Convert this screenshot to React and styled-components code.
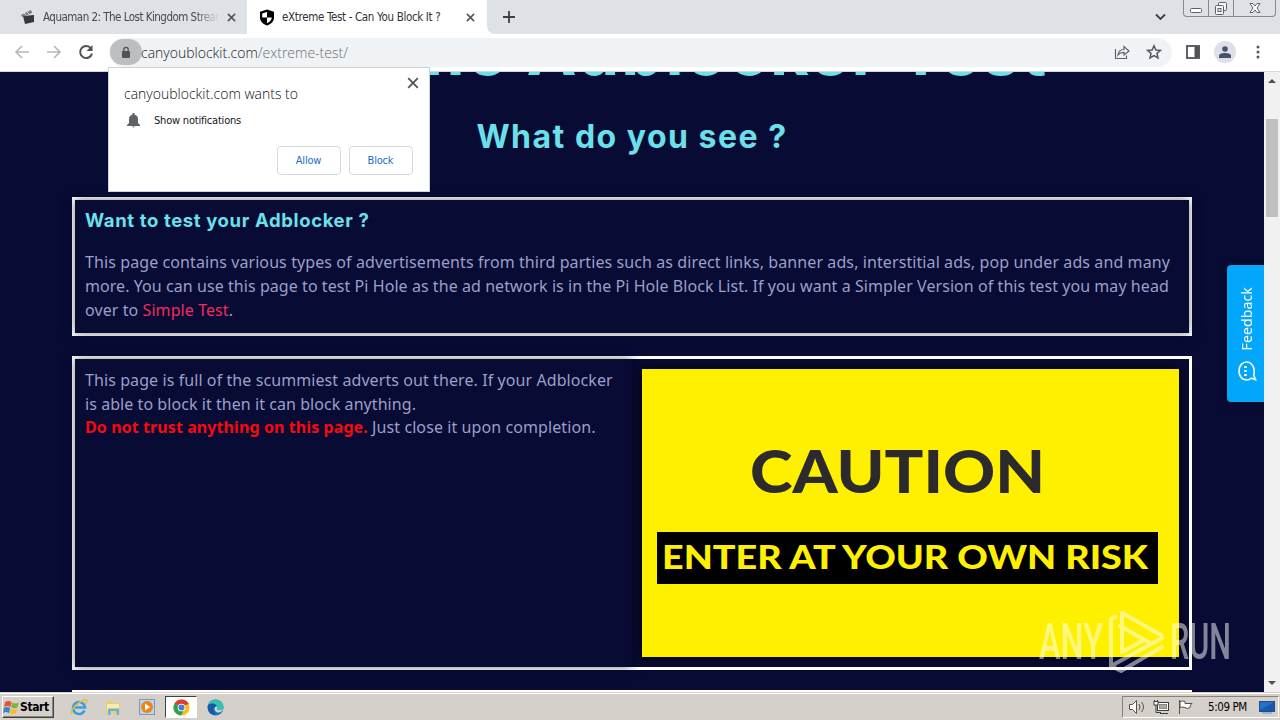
import React from "react";
import styled, { createGlobalStyle } from "styled-components";

const Global = createGlobalStyle`
  * { box-sizing: border-box; }
  body { margin: 0; overflow: hidden; }
  h1, h2, h3, p { margin: 0; }
`;

const ui = `"DejaVu Sans Condensed", "DejaVu Sans", sans-serif`;

const Screen = styled.div`
  position: relative;
  width: 1280px;
  height: 720px;
  display: flex;
  flex-direction: column;
  overflow: hidden;
  background: #080b34;
  font-family: ${ui};
  white-space: nowrap;
`;

/* ---------- browser chrome ---------- */
const TabStrip = styled.div`
  height: 34px;
  flex: none;
  display: flex;
  background: #dee1e6;
`;
const Tab = styled.div`
  width: ${(p) => (p.$active ? 240 : 247)}px;
  height: 34px;
  display: flex;
  align-items: center;
  padding: 0 9px 0 ${(p) => (p.$active ? 12 : 20)}px;
  background: ${(p) => (p.$active ? "#fff" : "#dee1e6")};
  border-radius: ${(p) => (p.$active ? "8px 8px 0 0" : "0 0 8px 0")};
  color: ${(p) => (p.$active ? "#303236" : "#45484d")};
  svg { flex: none; }
`;
const Under = styled.div`
  display: flex;
  background: #fff;
`;
const TabTitle = styled.span`
  width: ${(p) => p.$w}px;
  margin: 0 ${(p) => p.$gap}px 0 7px;
  overflow: hidden;
  font-size: 11.5px;
  line-height: 16px;
  letter-spacing: ${(p) => p.$ls}px;
  ${(p) => p.$fade && "mask-image: linear-gradient(90deg, #000 86%, transparent);"}
`;
const StripRest = styled.div`
  flex: 1;
  display: flex;
  align-items: flex-start;
  background: #dee1e6;
  border-bottom-left-radius: 8px;
  padding-left: 15px;
`;
const NewTab = styled.svg`margin-top: 10px;`;
const Chevron = styled.svg`margin: 13px 17px 0 auto;`;
const WinButtons = styled.div`
  display: flex;
  width: 93px;
  height: 17px;
  margin-right: 4px;
  border: 1px solid #85888e;
  border-top: 0;
  border-radius: 0 0 4px 4px;
`;
const WinButton = styled.div`
  width: ${(p) => p.$w}px;
  display: flex;
  justify-content: center;
  border-right: ${(p) => (p.$last ? 0 : 1)}px solid #85888e;
`;
const Toolbar = styled.div`
  height: 38px;
  flex: none;
  display: flex;
  align-items: center;
  background: #fff;
  border-bottom: 1px solid #d5d7db;
  padding: 0 14px 1px 14px;
`;
const NavIcons = styled.div`
  display: flex;
  align-items: center;
  gap: 16px;
  width: 95px;
`;
const Omnibox = styled.div`
  width: 1063px;
  height: 29px;
  border-radius: 15px;
  background: #f0f3f5;
  display: flex;
  align-items: center;
`;
const LockPill = styled.div`
  width: 32px;
  height: 26px;
  margin-left: 1px;
  border-radius: 13px;
  background: #bcbfc1;
  display: grid;
  place-items: center;
`;
const Url = styled.span`
  flex: 1;
  margin: 2px 0 0 -1px;
  color: #202124;
  font: 300 14px/20px "Open Sans", sans-serif;
  span { color: #6a6e73; }
`;
const OmniActions = styled.div`
  display: flex;
  gap: 16px;
  margin-right: 10px;
`;
const RightIcons = styled.div`
  margin-left: auto;
  display: flex;
  align-items: center;
`;
const Avatar = styled.div`
  width: 22px;
  height: 22px;
  border-radius: 50%;
  background: #dde0e6;
  display: grid;
  place-items: center;
  margin: 0 20px 0 14px;
`;

/* ---------- permission bubble ---------- */
const Bubble = styled.div`
  position: absolute;
  left: 108px;
  top: 67px;
  width: 322px;
  height: 125px;
  background: #fff;
  border: 1px solid #cfd1d5;
  padding: 9px 10px 0 15px;
  display: flex;
  flex-direction: column;
`;
const BubbleHead = styled.div`
  display: flex;
  justify-content: space-between;
  height: 34px;
`;
const BubbleTitle = styled.div`
  margin-top: 7px;
  font: 300 14px/20px "Open Sans", sans-serif;
  color: #111;
`;
const BubbleRow = styled.div`
  display: flex;
  align-items: center;
  height: 18px;
  padding-left: 3px;
  gap: 14px;
  font-size: 11px;
  letter-spacing: -0.2px;
  color: #161616;
`;
const BubbleButtons = styled.div`
  display: flex;
  justify-content: flex-end;
  gap: 8px;
  margin: 17px 6px 0 0;
`;
const BubbleButton = styled.button`
  width: 64px;
  height: 29px;
  padding: 0 1px 1px 0;
  border: 1px solid #d6d9dd;
  border-radius: 4px;
  background: #fff;
  color: #1b6fc4;
  font: 11px ${ui};
  letter-spacing: -0.2px;
`;

/* ---------- page ---------- */
const Viewport = styled.div`
  height: 620px;
  flex: none;
  display: flex;
  background: #080b34;
`;
const Page = styled.main`
  position: relative;
  flex: 1;
  height: 620px;
  overflow: hidden;
  padding: 0 72px;
  font-family: "Noto Sans", sans-serif;
  text-align: center;
`;
const Title = styled.h1`
  margin-top: -63px;
  height: 84px;
  font: 700 67px/84px Inter, sans-serif;
  letter-spacing: 2px;
  color: #6be0ea;
`;
const Subtitle = styled.h2`
  height: 40px;
  margin: 24px 0 40px;
  font: 700 32px/40px Inter, sans-serif;
  letter-spacing: 1.5px;
  color: #6be0ea;
`;
const Card = styled.section`
  display: flex;
  height: ${(p) => p.$h}px;
  margin-bottom: 20px;
  border: 3px solid #fff;
  text-align: left;
`;
const Panel = styled.div`
  flex: 1;
  padding: ${(p) => p.$pad};
  box-shadow: ${(p) => (p.$flat ? "none" : "0 0 10px rgba(0, 0, 0, 0.5)")};
  color: #9c9fc8;
`;
const CardTitle = styled.h3`
  height: 24px;
  margin-bottom: 18px;
  font: 700 18.5px/24px Inter, sans-serif;
  letter-spacing: 0.63px;
  color: #6be0ea;
`;
const Line = styled.p`
  font-size: 16px;
  line-height: ${(p) => p.$lh || 24}px;
  letter-spacing: ${(p) => p.$ls || 0}px;
`;
const Link = styled.a`color: #f22a5c;`;
const Warn = styled.strong`color: #f8080f;`;
const Feedback = styled.div`
  position: absolute;
  right: 0;
  top: 193px;
  width: 37px;
  height: 137px;
  border-radius: 4px 0 0 4px;
  background: #02a6fb;
  color: #fff;
  box-shadow: 0 0 7px rgba(0, 0, 0, 0.5);
  display: flex;
  flex-direction: column;
  align-items: center;
  justify-content: flex-end;
  padding: 0 0 20px 2px;
  gap: 9px;
  font-size: 14px;
  letter-spacing: 0.15px;
  span { writing-mode: vertical-rl; transform: rotate(180deg); line-height: 20px; }
`;
const ScrollBar = styled.div`
  width: 16px;
  background: #f1f1f1;
  display: flex;
  flex-direction: column;
  align-items: center;
  justify-content: space-between;
  padding: 6px 0;
`;
const Thumb = styled.div`
  width: 12px;
  height: 98px;
  margin: 36px 0 auto;
  background: #c0c0c0;
`;

/* ---------- taskbar ---------- */
const Taskbar = styled.div`
  height: 28px;
  flex: none;
  display: flex;
  align-items: center;
  background: #d5d0c9;
  border-top: 1px solid #d5d0c9;
  box-shadow: inset 0 1px #fff;
  padding: 1px 1px 0 2px;
`;
const Start = styled.div`
  width: 52px;
  height: 22px;
  margin-right: 8px;
  border: 1px solid;
  border-color: #fff #404040 #404040 #fff;
  box-shadow: inset -1px -1px #8a8782;
  display: flex;
  align-items: center;
  font: 700 12px ${ui};
  letter-spacing: -0.4px;
  color: #000;
`;
const TaskItem = styled.div`
  width: ${(p) => (p.$on ? 32 : 34)}px;
  height: 22px;
  margin: 0 ${(p) => (p.$on ? 1 : 0)}px;
  display: grid;
  place-items: center;
  ${(p) => p.$on && "background:#fff;border:1px solid;border-color:#404040 #fff #fff #404040;"}
`;
const Tray = styled.div`
  margin-left: auto;
  width: 157px;
  height: 22px;
  border: 1px solid;
  border-color: #85817b #fff #fff #85817b;
  display: flex;
  align-items: center;
  padding-left: 5px;
  gap: 7px;
  font-size: 11.5px;
  color: #000;
  time { margin: 0 4px 0 7px; width: 40px; letter-spacing: -0.4px; }
`;
const Watermark = styled.svg`
  position: absolute;
  left: 1036px;
  top: 606px;
`;

const Cross = ({ s = 9, w = 1.7, color = "#505358" }) => (
  <svg width={s} height={s} viewBox="0 0 10 10" stroke={color} strokeWidth={w} fill="none">
    <path d="M1 1l8 8M9 1l-8 8" />
  </svg>
);

const Sign = styled.svg`
  display: block;
  box-shadow: 0 0 10px rgba(0, 0, 0, 0.9);
`;

const CautionSign = () => (
  <Sign width="537" height="288">
    <rect width="537" height="288" fill="#fff000" />
    <text x="108" y="124" fontFamily="Lato" fontWeight="900" fontSize="59" fill="#2c2a2c" textLength="295" lengthAdjust="spacingAndGlyphs">CAUTION</text>
    <rect x="15" y="163" width="501" height="52" fill="#000" />
    <text x="20" y="200" fontFamily="Lato" fontWeight="900" fontSize="33" fill="#fff000" textLength="486" lengthAdjust="spacingAndGlyphs">ENTER AT YOUR OWN RISK</text>
  </Sign>
);

const Chrome = () => (
  <svg width="17" height="17" viewBox="0 0 18 18">
    <circle cx="9" cy="9" r="8.5" fill="#fbc116" />
    <path d="M9 9L1.6 4.8A8.5 8.5 0 0 1 16.4 4.8z" fill="#e33b2e" />
    <path d="M9 9L1.6 4.8A8.5 8.5 0 0 0 8.5 17.5L12 11z" fill="#2ba24c" />
    <path d="M9 5h7.5" stroke="#e33b2e" strokeWidth="1" />
    <circle cx="9" cy="9" r="4.1" fill="#fff" />
    <circle cx="9" cy="9" r="3.2" fill="#3f7de8" />
  </svg>
);

const MenuDots = styled.svg`margin-right: 6px;`;

export default function App() {
  return (
    <Screen>
      <Global />
      <Under>
        <TabStrip>
          <Tab>
            <svg width="16" height="16" viewBox="0 0 16 16">
              <path d="M3 7l11-1v7l-9 2z" fill="#36383b" />
              <path d="M1 6L11 1l1 3L2 8z" fill="#75787c" />
              <path d="M4 4l2 2M7 3l2 2" stroke="#dee1e6" />
            </svg>
            <TabTitle $w={176} $gap={8} $ls={-0.52} $fade>Aquaman 2: The Lost Kingdom Streaming</TabTitle>
            <Cross />
          </Tab>
        </TabStrip>
        <Tab $active>
          <svg width="16" height="17" viewBox="0 0 16 17">
            <path d="M8 .5l7 2.3v5.7c0 4-3.2 6.8-7 8-3.8-1.2-7-4-7-8V2.800z" fill="#000" />
            <path d="M8 3v5.500H3.200V4.500zM8 8.500h4.800c-.2 2.800-2.300 4.700-4.800 5.700z" fill="#fff" />
          </svg>
          <TabTitle $w={160} $gap={24} $ls={-0.34}>eXtreme Test - Can You Block It ?</TabTitle>
          <Cross />
        </Tab>
        <StripRest>
          <NewTab width="14" height="14" stroke="#3c4043" strokeWidth="1.8"><path d="M7 1v12M1 7h12" /></NewTab>
          <Chevron width="11" height="8" fill="none" stroke="#3c4043" strokeWidth="1.8"><path d="M1 1.500l4.500 4.500L10 1.500" /></Chevron>
          <WinButtons>
            <WinButton $w={25}>
              <svg width="14" height="16" fill="#fff" stroke="#5d6065"><rect x="1.500" y="8.500" width="11" height="4" rx="1" /></svg>
            </WinButton>
            <WinButton $w={25}>
              <svg width="14" height="16" fill="#f4f5f7" stroke="#5d6065"><rect x="4.500" y="2.500" width="8" height="8" rx="1" /><rect x="1.500" y="5.500" width="8" height="9" rx="1" /><rect x="4" y="8.500" width="3" height="3" /></svg>
            </WinButton>
            <WinButton $w={41} $last>
              <svg width="12" height="16" fill="#fff" stroke="#5d6065"><path d="M1 3.500h3l2 2.500 2-2.500h3L8 8l3 4.500H8L6 10l-2 2.500H1L4 8z" /></svg>
            </WinButton>
          </WinButtons>
        </StripRest>
      </Under>

      <Toolbar>
        <NavIcons>
          <svg width="16" height="16" fill="none" stroke="#b4b6b9" strokeWidth="1.6"><path d="M15 8H2M8 2L2 8l6 6" /></svg>
          <svg width="16" height="16" fill="none" stroke="#b4b6b9" strokeWidth="1.6"><path d="M1 8h13M8 2l6 6-6 6" /></svg>
          <svg width="16" height="16" fill="none" stroke="#4f5256" strokeWidth="2"><path d="M13 4.500A6 6 0 1 0 14 9.500" /><path d="M14.500 1v6h-6z" fill="#4f5256" stroke="none" /></svg>
        </NavIcons>
        <Omnibox>
          <LockPill>
            <svg width="10" height="13"><rect x="1" y="5" width="8" height="7" rx="1" fill="#505356" /><path d="M2.800 5V3.500a2.200 2.200 0 0 1 4.400 0V5" fill="none" stroke="#505356" strokeWidth="1.300" /></svg>
          </LockPill>
          <Url>canyoublockit.com<span>/extreme-test/</span></Url>
          <OmniActions>
            <svg width="16" height="16" fill="none" stroke="#5f6368" strokeWidth="1.200"><path d="M1.500 5v9.500h11V11.500M4 11c.5-4 3-5.500 6-5.500V2.500L15 7l-5 4V8.300C7.500 8.300 5.500 9 4 11z" /></svg>
            <svg width="16" height="16" viewBox="0 0 16 16" fill="none" stroke="#55585d" strokeWidth="1.500"><path d="M8 1.800l1.900 4.200 4.600.4-3.500 3 1 4.500L8 11.500l-4 2.400 1-4.500-3.500-3L6.100 6z" /></svg>
          </OmniActions>
        </Omnibox>
        <RightIcons>
          <svg width="14" height="14"><rect x="1" y="1" width="12" height="12" fill="#fff" stroke="#4f5256" strokeWidth="1.800" /><rect x="8.500" y="1" width="5" height="12" fill="#4f5256" /></svg>
          <Avatar><svg width="12" height="12" fill="#47536d"><circle cx="6" cy="3" r="2.800" /><path d="M0 12V9.500C0 6 12 6 12 9.500V12z" /></svg></Avatar>
        </RightIcons>
        <MenuDots width="4" height="14" fill="#55585d"><circle cx="2" cy="2" r="1.500" /><circle cx="2" cy="7" r="1.500" /><circle cx="2" cy="12" r="1.500" /></MenuDots>
      </Toolbar>

      <Viewport>
        <Page>
          <Title>eXtreme Adblocker Test</Title>
          <Subtitle>What do you see ?</Subtitle>
          <Card $h={139}>
            <Panel $pad="8px 10px">
              <CardTitle>Want to test your Adblocker ?</CardTitle>
              <Line $ls={0.092}>This page contains various types of advertisements from third parties such as direct links, banner ads, interstitial ads, pop under ads and many</Line>
              <Line $ls={0.063}>more. You can use this page to test Pi Hole as the ad network is in the Pi Hole Block List. If you want a Simpler Version of this test you may head</Line>
              <Line $ls={0.08}>over to <Link>Simple Test</Link>.</Line>
            </Panel>
          </Card>
          <Card $h={314}>
            <Panel $pad="9px 10px">
              <Line $ls={0.085}>This page is full of the scummiest adverts out there. If your Adblocker</Line>
              <Line $ls={0.06}>is able to block it then it can block anything.</Line>
              <Line $lh={23} $ls={0.09}><Warn>Do not trust anything on this page.</Warn> Just close it upon completion.</Line>
            </Panel>
            <Panel $pad="10px" $flat><CautionSign /></Panel>
          </Card>
          <Card $h={60} />
          <Feedback>
            <span>Feedback</span>
            <svg width="20" height="22" viewBox="0 0 20 22" fill="none" stroke="#fff" strokeWidth="1.600">
              <path d="M9.500 2C5 2 2 6 2 11s3 9 7.500 9c2 0 3.500-.6 4.700-1.800l4.300 1.500-1.800-4.500C18.500 8 15 2 9.500 2z" />
              <path d="M8.500 6v2M8.500 10v2M8.500 14v2" strokeWidth="2.400" />
            </svg>
          </Feedback>
        </Page>
        <ScrollBar>
          <svg width="8" height="5" fill="#505050"><path d="M0 5l4-4 4 4z" /></svg>
          <Thumb />
          <svg width="8" height="5" fill="#505050"><path d="M0 0l4 4 4-4z" /></svg>
        </ScrollBar>
      </Viewport>

      <Taskbar>
        <Start>
          <svg width="17" height="17" viewBox="0 0 16 16">
            <path d="M2 3c2-1.500 4-1.500 6 0L7 7.500c-2-1.200-4-1.200-6 0z" fill="#e4562a" />
            <path d="M8.700 3.300c2 1.300 4 1.300 6.300 0l-1.300 4.500c-2 1.200-4 1.200-6 0z" fill="#78b63c" />
            <path d="M.8 8.500c2-1.200 4-1.200 6 0l-1.200 4.800c-2-1.400-4-1.400-5.600 0z" fill="#3a84cf" />
            <path d="M7.500 8.900c2 1.200 4 1.200 6 0l-1.300 4.500c-2 1.300-4 1.300-6 0z" fill="#f3bd2b" />
          </svg>
          Start
        </Start>
        <TaskItem>
          <svg width="18" height="18" viewBox="0 0 18 18" fill="none">
            <path d="M14.500 12.500A6 6 0 1 1 15 9.500H5" stroke="#3a9fdc" strokeWidth="2.600" />
            <path d="M2 16C-1 12 10 2 16 2c2 1 0 3-1 4" stroke="#e8bd3c" strokeWidth="1.400" />
          </svg>
        </TaskItem>
        <TaskItem>
          <svg width="17" height="17" viewBox="0 0 17 17">
            <path d="M1 2h6l1 2h7v11H1z" fill="#e9cf72" /><path d="M2 5h12v7H2z" fill="#f9ebac" />
            <path d="M3 16V9.500h11V16h-2.500v-4h-6v4z" fill="#69b4dc" />
          </svg>
        </TaskItem>
        <TaskItem>
          <svg width="16" height="16"><rect x=".5" y=".5" width="15" height="15" fill="#b9d6ed" stroke="#6f9cc4" /><circle cx="8" cy="8" r="6" fill="#f08416" /><path d="M6 4.500l5 3.500-5 3.500z" fill="#fff" /></svg>
        </TaskItem>
        <TaskItem $on><Chrome /></TaskItem>
        <TaskItem>
          <svg width="17" height="17" viewBox="0 0 17 17">
            <circle cx="8.500" cy="8.500" r="8" fill="#1676c4" />
            <path d="M1 6C3-1 15-1 16.500 7c.5 4-4 5-6.500 3.500C12 5 5 3 1 6z" fill="#35c3b0" />
            <path d="M10 10.500c2 1 4 .8 6-.5-.5 3-4 4.500-6.500 3S7 8.500 9 7c1.500 1 1.500 2.500 1 3.500z" fill="#d5d0c9" />
            <path d="M1 6c5-3 9 0 8 1.500-3 0-4 5 0 8.500C4 16-.5 11 1 6z" fill="#155aa8" />
          </svg>
        </TaskItem>
        <Tray>
          <svg width="18" height="16" fill="#fff" stroke="#55534f"><path d="M1.500 5.500h3l4-4v13l-4-4h-3z" /><path d="M11 5q2 3 0 6M13.500 3q4 5 0 10" fill="none" /></svg>
          <svg width="17" height="16" fill="#fff" stroke="#3f3e3b"><rect x="4.500" y="3.500" width="11" height="8" /><rect x="6.500" y="5.500" width="7" height="4" fill="#aaa8a4" stroke="#8a8884" /><path d="M7 14.500h8" /><path d="M1.500 1v2M4.500 1v2M3 5v8.500h5" fill="none" /><rect x="1" y="2.500" width="4" height="3.500" /></svg>
          <svg width="17" height="16" fill="#fff" stroke="#55534f"><path d="M2.500 1v14" /><path d="M3 2.500q3-1 5 0v2h7q-2 1-2 4-3 2-5 0-2-1-5 0z" /></svg>
          <time>5:09 PM</time>
          <svg width="16" height="14"><rect x=".5" y="1.500" width="15" height="10" fill="#2470cc" stroke="#1d4f92" /><path d="M1 10L15 2v9H1z" fill="#1a57ad" /><path d="M3 13h10" stroke="#6b93c4" /></svg>
        </Tray>
      </Taskbar>

      <Bubble>
        <BubbleHead>
          <BubbleTitle>canyoublockit.com wants to</BubbleTitle>
          <Cross s={12} w={1.5} />
        </BubbleHead>
        <BubbleRow>
          <svg width="13" height="16" viewBox="0 0 13 16" fill="#5f6368"><path d="M5.500 1h2v1.500Q11 3.500 11 7v4l2 2v1H0v-1l2-2V7q0-3.500 3.500-4.500zM5 14.500h3q-1.500 2-3 0z" /></svg>
          Show notifications
        </BubbleRow>
        <BubbleButtons>
          <BubbleButton>Allow</BubbleButton>
          <BubbleButton>Block</BubbleButton>
        </BubbleButtons>
      </Bubble>

      <Watermark width="200" height="70" fill="none" stroke="#fff" opacity="0.5">
        <g fill="#fff" stroke="none" fontFamily="Roboto" fontSize="50" fontWeight="500">
          <text x="3" y="53" textLength="64" lengthAdjust="spacingAndGlyphs">ANY</text>
          <text x="134" y="53" textLength="61" lengthAdjust="spacingAndGlyphs">RUN</text>
        </g>
        <g strokeWidth="4" strokeLinejoin="round" strokeLinecap="round">
          <path d="M86 46V7l39 22M79 11l-4 2v47l51-28M86 46l22-12M84 20l30 17M75 60l10 5 41-24" />
        </g>
      </Watermark>
    </Screen>
  );
}
